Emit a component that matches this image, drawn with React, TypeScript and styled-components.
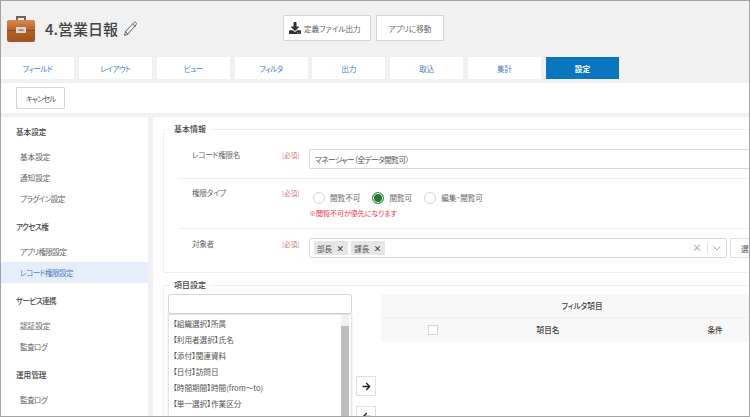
import React from "react";
import styled, { createGlobalStyle, css } from "styled-components";
import { FaArrowLeft, FaArrowRight, FaDownload } from "react-icons/fa";

const GlobalStyle = createGlobalStyle`
  html, body {
    margin: 0;
    padding: 0;
    background: #fff;
  }
  * {
    box-sizing: border-box;
  }
  body {
    font-family: "Noto Sans CJK JP", "Noto Sans", sans-serif;
    font-feature-settings: "palt";
  }
`;

const tabs = ["フィールド", "レイアウト", "ビュー", "フィルタ", "出力", "取込", "集計", "設定"];

const menu = [
  { title: "基本設定", items: ["基本設定", "通知設定", "プラグイン設定"] },
  { title: "アクセス権", items: ["アプリ権限設定", "レコード権限設定"] },
  { title: "サービス連携", items: ["認証設定", "監査ログ"] },
  { title: "運用管理", items: ["監査ログ"] },
];

const fields = [
  "【組織選択】所属",
  "【利用者選択】氏名",
  "【添付】関連資料",
  "【日付】訪問日",
  "【時間期間】時間(from～to)",
  "【単一選択】作業区分",
  "【単一選択】分類",
];

// the reference font has narrow katakana
const hasKana = (text: string) => /[ァ-ヶー]/.test(text);

const narrowKana = css<{ $kana?: boolean }>`
  letter-spacing: ${(p) => (p.$kana ? "-0.6px" : "0")};
`;

const Briefcase = () => (
  <svg width="29" height="27" viewBox="0 0 29 27">
    <defs>
      <linearGradient id="caseTop" x1="0" y1="0" x2="0" y2="1">
        <stop offset="0" stopColor="#d98a4e" />
        <stop offset="1" stopColor="#b9612a" />
      </linearGradient>
      <linearGradient id="caseBottom" x1="0" y1="0" x2="0" y2="1">
        <stop offset="0" stopColor="#c46d30" />
        <stop offset="1" stopColor="#a0531f" />
      </linearGradient>
    </defs>
    <path d="M11 6V2h8v4" fill="none" stroke="#6f6259" strokeWidth="2" />
    <rect x="1" y="5" width="28" height="22" rx="2.5" fill="url(#caseBottom)" />
    <path d="M1 7.5A2.5 2.5 0 0 1 3.5 5h23A2.5 2.5 0 0 1 29 7.5V15H1z" fill="url(#caseTop)" />
    <rect x="1" y="15" width="28" height="1" fill="#8f4a1c" />
    <rect x="10" y="12" width="10" height="6" rx="0.5" fill="#dcd6cf" />
    <rect x="12.5" y="14.5" width="5" height="1.2" fill="#6f6a64" />
  </svg>
);

const PencilIcon = () => (
  <svg width="15" height="16" viewBox="0 0 15 16" fill="none" stroke="#555" strokeWidth="0.9">
    <path d="M1.5 14.5l1-4L10.8 1.6c.7-.7 1.6-.6 2.2 0s.7 1.5 0 2.2L4.8 13.2z" />
    <path d="M2.6 10.4l2.2 2.8M9.6 3l3 2.6" />
  </svg>
);

const Chevron = () => (
  <svg width="8" height="5" viewBox="0 0 8 5" fill="none" stroke="#aaa" strokeWidth="1">
    <path d="M.5.5L4 4 7.5.5" />
  </svg>
);

export default function App() {
  return (
    <Frame>
      <GlobalStyle />
      <Header>
        <TitleBox>
          <Briefcase />
          <Title>4.営業日報</Title>
          <PencilIcon />
        </TitleBox>
        <HeaderButton $width={88}>
          <FaDownload size={12} color="#333" />
          定義ファイル出力
        </HeaderButton>
        <HeaderButton $width={68} $center>
          アプリに移動
        </HeaderButton>
      </Header>
      <Tabs>
        {tabs.map((tab) => (
          <Tab key={tab} $active={tab === "設定"} $kana={hasKana(tab)}>
            {tab}
          </Tab>
        ))}
      </Tabs>
      <ActionBar>
        <CancelButton>キャンセル</CancelButton>
      </ActionBar>
      <Body>
        <Sidebar>
          {menu.map((group) => (
            <MenuGroup key={group.title}>
              <MenuTitle $kana={hasKana(group.title)}>{group.title}</MenuTitle>
              {group.items.map((item) => (
                <MenuItem key={item} $active={item === "レコード権限設定"} $kana={hasKana(item)}>
                  {item}
                </MenuItem>
              ))}
            </MenuGroup>
          ))}
        </Sidebar>
        <Main>
          <Section>
            <Legend>基本情報</Legend>
            <FormRow>
              <FormLabel>レコード権限名</FormLabel>
              <Required>[必須]</Required>
              <TextBox>マネージャー（全データ閲覧可）</TextBox>
            </FormRow>
            <FormRow>
              <FormLabel>権限タイプ</FormLabel>
              <Required>[必須]</Required>
              <div>
                <RadioGroup>
                  <RadioItem>
                    <Radio />
                    閲覧不可
                  </RadioItem>
                  <RadioItem>
                    <Radio $checked />
                    閲覧可
                  </RadioItem>
                  <RadioItem>
                    <Radio />
                    編集･閲覧可
                  </RadioItem>
                </RadioGroup>
                <Note>※閲覧不可が優先になります</Note>
              </div>
            </FormRow>
            <FormRow>
              <FormLabel>対象者</FormLabel>
              <Required>[必須]</Required>
              <SelectLine>
                <MultiSelect>
                  <Chip>
                    部長<ChipClose>×</ChipClose>
                  </Chip>
                  <Chip>
                    課長<ChipClose>×</ChipClose>
                  </Chip>
                  <SelectTools>
                    <ClearMark>×</ClearMark>
                    <ToolDivider />
                    <Chevron />
                  </SelectTools>
                </MultiSelect>
                <PickButton>選択</PickButton>
              </SelectLine>
            </FormRow>
          </Section>
          <Section>
            <Legend>項目設定</Legend>
            <Columns>
              <ListColumn>
                <SearchBox />
                <ListBox>
                  <ListItems>
                    {fields.map((field) => (
                      <ListItem key={field}>{field}</ListItem>
                    ))}
                  </ListItems>
                  <ScrollTrack>
                    <ScrollArrow />
                    <ScrollThumb />
                  </ScrollTrack>
                </ListBox>
              </ListColumn>
              <MoveButtons>
                <MoveButton>
                  <FaArrowRight size={9} />
                </MoveButton>
                <MoveButton>
                  <FaArrowLeft size={9} />
                </MoveButton>
              </MoveButtons>
              <FilterTable>
                <colgroup>
                  <TableCol $width={104} />
                  <TableCol $width={126} />
                  <TableCol $width={172} />
                </colgroup>
                <thead>
                  <tr>
                    <GroupHead colSpan={3}>フィルタ項目</GroupHead>
                  </tr>
                  <tr>
                    <CheckHead>
                      <CheckBox />
                    </CheckHead>
                    <NameHead>項目名</NameHead>
                    <CondHead>条件</CondHead>
                  </tr>
                </thead>
              </FilterTable>
            </Columns>
          </Section>
        </Main>
      </Body>
    </Frame>
  );
}

const Frame = styled.div`
  width: 750px;
  height: 417px;
  overflow: hidden;
  display: flex;
  flex-direction: column;
  background: #f1f1f1;
  border: 1px solid #a3a3a3;
  color: #555;
  font-size: 7.6px;
`;

const Header = styled.div`
  height: 56px;
  flex: none;
  display: flex;
  align-items: flex-start;
  padding-top: 14px;
  gap: 5px;
`;

const TitleBox = styled.div`
  width: 277px;
  flex: none;
  display: flex;
  align-items: center;
  gap: 5px;
  padding-left: 5px;
  height: 27px;
`;

const Title = styled.div`
  font-size: 15px;
  font-weight: 500;
  color: #444;
  margin-left: 5px;
  font-feature-settings: normal;
`;

const HeaderButton = styled.div<{ $width: number; $center?: boolean }>`
  width: ${(p) => p.$width}px;
  height: 26px;
  display: flex;
  align-items: center;
  justify-content: ${(p) => (p.$center ? "center" : "flex-start")};
  gap: 3px;
  padding-left: ${(p) => (p.$center ? 0 : 5)}px;
  background: #fff;
  border: 1px solid #d4d4d4;
  border-radius: 1px;
  color: #666;
`;

const Tabs = styled.div`
  height: 26px;
  flex: none;
  display: flex;
  gap: 4.85px;
  padding-bottom: 4px;
`;

const Tab = styled.div<{ $active?: boolean; $kana?: boolean }>`
  width: 73px;
  display: flex;
  align-items: center;
  justify-content: center;
  background: ${(p) => (p.$active ? "#0a76c0" : "#fff")};
  color: ${(p) => (p.$active ? "#fff" : "#4a7fc4")};
  font-weight: ${(p) => (p.$active ? 700 : 400)};
  ${narrowKana}
`;

const ActionBar = styled.div`
  height: 30px;
  flex: none;
  display: flex;
  align-items: center;
  padding-left: 15px;
  background: #fff;
`;

const CancelButton = styled.div`
  width: 49px;
  height: 22px;
  display: flex;
  align-items: center;
  justify-content: center;
  border: 1px solid #d4d4d4;
  border-radius: 1px;
  color: #555;
  letter-spacing: -1px;
`;

const Body = styled.div`
  flex: 1;
  min-height: 0;
  display: flex;
  gap: 5px;
  margin-top: 4px;
`;

const Sidebar = styled.div`
  width: 147px;
  flex: none;
  background: #fff;
  padding-top: 4px;
`;

const MenuGroup = styled.div`
  margin-bottom: 7px;
`;

const MenuTitle = styled.div<{ $kana?: boolean }>`
  height: 22px;
  margin-bottom: 3px;
  padding: 0 0 2px 15px;
  display: flex;
  align-items: center;
  color: #444;
  font-weight: 500;
  ${narrowKana}
`;

const MenuItem = styled.div<{ $active?: boolean; $kana?: boolean }>`
  height: 21px;
  padding-left: 19px;
  display: flex;
  align-items: center;
  background: ${(p) => (p.$active ? "#e6eefb" : "transparent")};
  color: ${(p) => (p.$active ? "#4a7fc4" : "#666")};
  ${narrowKana}
`;

const Main = styled.div`
  flex: 1;
  min-width: 0;
  overflow: hidden;
  background: #fff;
  padding: 6px 0 0 10px;
`;

const Section = styled.fieldset`
  width: 640px;
  margin: 0 0 6px;
  padding: 0 0 4px;
  border: 1px solid #f0f0f0;
  border-radius: 2px;
`;

const Legend = styled.legend`
  margin-left: 6px;
  padding: 0 4px;
  color: #444;
  font-size: 8px;
  font-weight: 500;
  line-height: 12px;
`;

const FormRow = styled.div`
  margin: 0 0 0 14px;
  padding: 8px 0 9px;
  display: grid;
  grid-template-columns: 104px 27px 1fr;
  align-items: start;
  border-bottom: 1px solid #f0f0f0;
  ${Legend} + & {
    padding-top: 14px;
  }
  &:last-child {
    border-bottom: 0;
    padding: 9px 0 10px;
  }
`;

const FormLabel = styled.div`
  padding-left: 14px;
  line-height: 12px;
  color: #666;
  letter-spacing: -0.3px;
`;

const Required = styled.div`
  line-height: 12px;
  color: #c27a7a;
  font-size: 6.5px;
`;

const TextBox = styled.div`
  height: 20px;
  display: flex;
  align-items: center;
  padding-left: 5px;
  border: 1px solid #d8d8d8;
  border-radius: 2px;
  color: #555;
  letter-spacing: -0.5px;
`;

const RadioGroup = styled.div`
  display: flex;
  height: 21px;
  align-items: center;
  gap: 12px;
  padding-left: 4px;
`;

const RadioItem = styled.div`
  display: flex;
  align-items: center;
  gap: 5px;
  color: #666;
`;

const Radio = styled.span<{ $checked?: boolean }>`
  width: 12px;
  height: 12px;
  flex: none;
  border-radius: 50%;
  border: 1px solid ${(p) => (p.$checked ? "#3d9150" : "#d8d8d8")};
  background: ${(p) => (p.$checked ? "#1f7a2e" : "#fff")};
  box-shadow: ${(p) => (p.$checked ? "inset 0 0 0 1px #fff" : "none")};
`;

const Note = styled.div`
  color: #f03a4a;
  font-size: 7px;
  line-height: 11px;
`;

const SelectLine = styled.div`
  display: flex;
  gap: 3px;
`;

const MultiSelect = styled.div`
  width: 418px;
  height: 20px;
  display: flex;
  align-items: center;
  gap: 3px;
  padding-left: 4px;
  border: 1px solid #d8d8d8;
  border-radius: 2px;
`;

const Chip = styled.span`
  height: 14px;
  display: flex;
  align-items: center;
  gap: 4px;
  padding: 0 4px 0 3px;
  background: #e6e6e6;
  color: #555;
`;

const ChipClose = styled.span`
  color: #333;
  font-size: 8px;
  font-weight: 700;
`;

const SelectTools = styled.div`
  margin-left: auto;
  display: flex;
  align-items: center;
  gap: 5px;
  padding-right: 5px;
`;

const ClearMark = styled.span`
  color: #b5b5b5;
  font-size: 10px;
  font-weight: 700;
  line-height: 1;
`;

const ToolDivider = styled.span`
  width: 1px;
  height: 10px;
  background: #e0e0e0;
`;

const PickButton = styled.div`
  width: 50px;
  height: 20px;
  display: flex;
  align-items: center;
  padding-left: 10px;
  border: 1px solid #e0e0e0;
  color: #555;
`;

const Columns = styled.div`
  display: flex;
  padding: 3px 0 0 4px;
  align-items: flex-start;
`;

const ListColumn = styled.div`
  width: 184px;
  flex: none;
`;

const SearchBox = styled.div`
  height: 20px;
  border: 1px solid #d8d8d8;
  border-radius: 2px;
`;

const ListBox = styled.div`
  height: 130px;
  display: flex;
  padding-right: 2px;
  border: 1px solid #e4e4e4;
  box-shadow: 0 0 2px rgba(0, 0, 0, 0.12);
`;

const ListItems = styled.div`
  flex: 1;
  padding-left: 4px;
`;

const ListItem = styled.div`
  height: 16px;
  display: flex;
  align-items: center;
  color: #555;
  white-space: nowrap;
`;

const ScrollTrack = styled.div`
  width: 8px;
  flex: none;
  display: flex;
  flex-direction: column;
  background: #f1f1f1;
`;

const ScrollArrow = styled.div`
  height: 11px;
  flex: none;
`;

const ScrollThumb = styled.div`
  flex: 1;
  background: #bdbdbd;
`;

const MoveButtons = styled.div`
  width: 29px;
  flex: none;
  display: flex;
  flex-direction: column;
  gap: 10px;
  padding: 82px 0 0 4px;
`;

const MoveButton = styled.div`
  width: 20px;
  height: 20px;
  display: flex;
  align-items: center;
  justify-content: center;
  border: 1px solid #e0e0e0;
  color: #222;
`;

const FilterTable = styled.table`
  width: 402px;
  flex: none;
  border-collapse: collapse;
  table-layout: fixed;
  background: #f8f8f8;
  color: #444;
`;

const TableCol = styled.col<{ $width: number }>`
  width: ${(p) => p.$width}px;
`;

const GroupHead = styled.th`
  height: 23px;
  padding: 0;
  font-weight: 500;
  border-bottom: 1px solid #f0f0f0;
`;

const CheckHead = styled.th`
  height: 25px;
  padding: 0;
`;

const NameHead = styled.th`
  padding: 0;
  font-weight: 500;
`;

const CondHead = styled.th`
  padding: 0 0 0 36px;
  font-weight: 500;
`;

const CheckBox = styled.span`
  display: block;
  width: 10px;
  height: 10px;
  margin: 0 auto;
  background: #fff;
  border: 1px solid #d8d8d8;
`;
